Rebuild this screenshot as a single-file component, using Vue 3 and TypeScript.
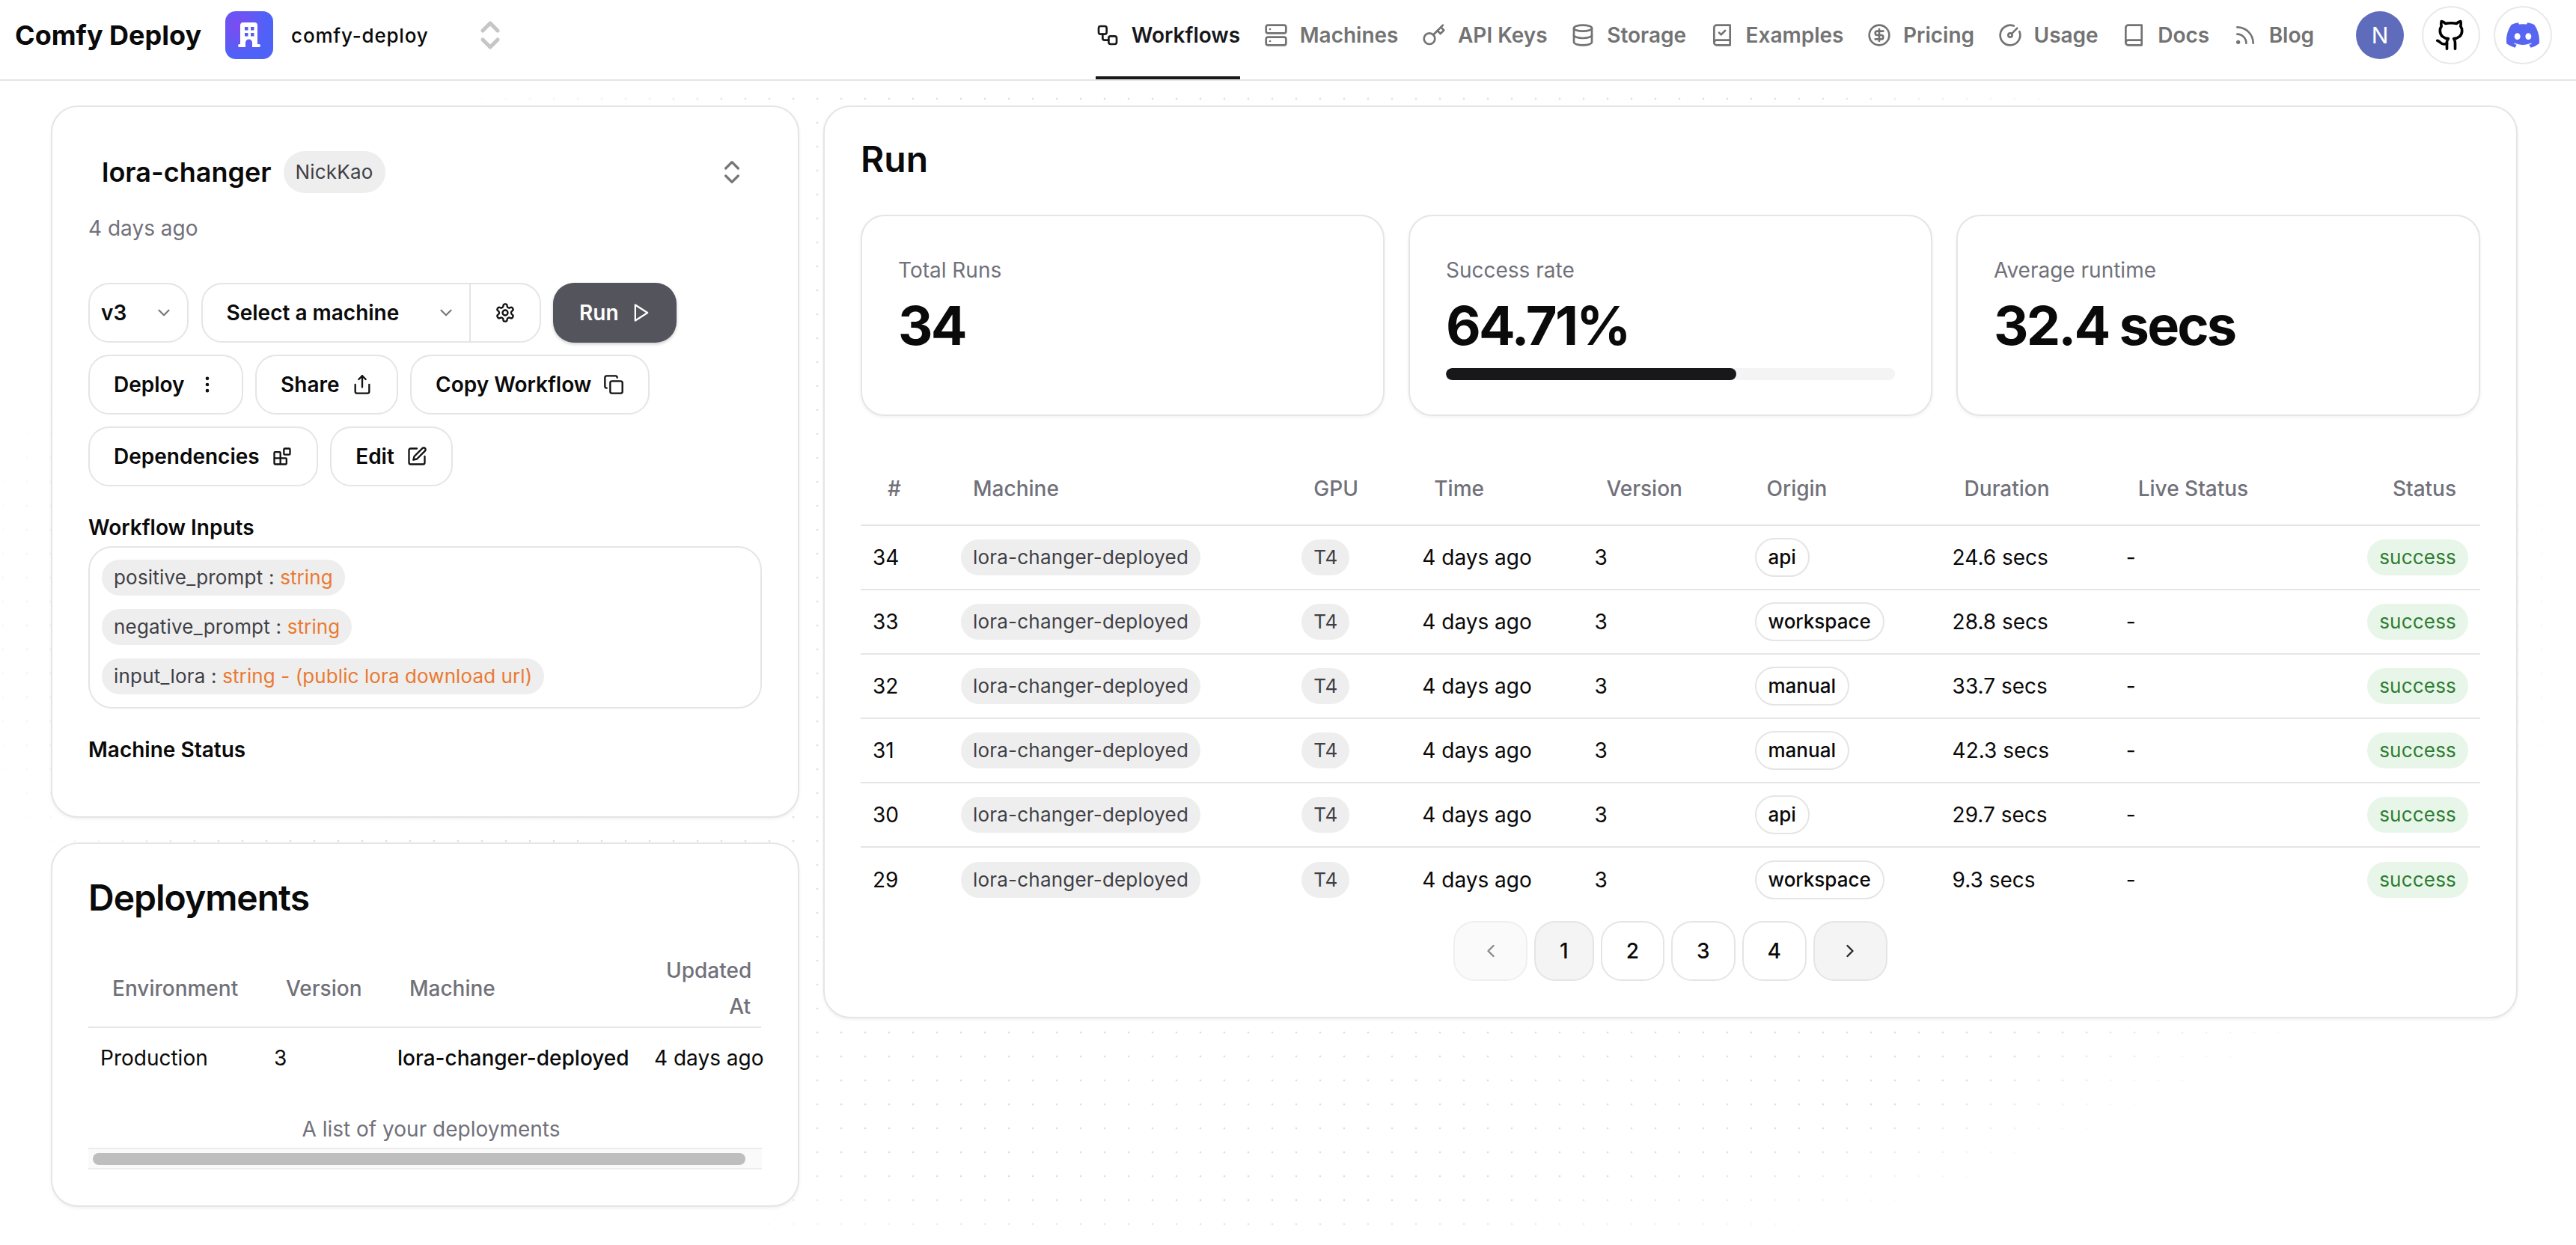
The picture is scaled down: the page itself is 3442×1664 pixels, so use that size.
<template>
  <div class="page">
    <div class="dots"></div>

    <header class="topbar">
      <div class="brand">
        <span class="brand-name">Comfy Deploy</span>
        <span class="team-logo">
          <svg width="64" height="64" viewBox="0 0 64 64">
            <path d="M20 48V19a4 4 0 0 1 4-4h15a4 4 0 0 1 4 4v25h2a2 2 0 0 1 0 4h-9v-6a4.5 4.5 0 0 0-9 0v6h-8a2 2 0 0 1 0-4h1Z" fill="#fff" />
            <rect x="26" y="21" width="4.5" height="4.5" fill="#5a5cf4" />
            <rect x="34" y="21" width="4.5" height="4.5" fill="#5a5cf4" />
            <rect x="26" y="29" width="4.5" height="4.5" fill="#5a5cf4" />
            <rect x="34" y="29" width="4.5" height="4.5" fill="#5a5cf4" />
          </svg>
        </span>
        <span class="team-name">comfy-deploy</span>
        <svg class="team-switch" width="48" height="48" viewBox="0 0 24 24" fill="none" stroke="#c6c6c6" stroke-width="2.6" stroke-linecap="round" stroke-linejoin="round">
          <path d="m7 15 5 5 5-5" />
          <path d="m7 9 5-5 5 5" />
        </svg>
      </div>

      <nav class="nav">
        <a v-for="item in navItems" :key="item.label" class="nav-item" :class="{ active: item.active }">
          <svg width="32" height="32" viewBox="0 0 24 24" fill="none" stroke="currentColor" stroke-width="2" stroke-linecap="round" stroke-linejoin="round" v-html="item.icon"></svg>
          {{ item.label }}
        </a>
      </nav>

      <div class="top-actions">
        <span class="avatar">N</span>
        <span class="round-btn">
          <svg width="44" height="44" viewBox="0 0 24 24" fill="none" stroke="#000" stroke-width="2" stroke-linecap="round" stroke-linejoin="round">
            <path d="M15 22v-4a4.8 4.8 0 0 0-1-3.5c3 0 6-2 6-5.5.08-1.25-.27-2.48-1-3.5.28-1.15.28-2.35 0-3.5 0 0-1 0-3 1.5-2.64-.5-5.36-.5-8 0C6 2 5 2 5 2c-.3 1.15-.3 2.35 0 3.5A5.403 5.403 0 0 0 4 9c0 3.5 3 5.5 6 5.5-.39.49-.68 1.05-.85 1.65-.17.6-.22 1.23-.15 1.85v4" />
            <path d="M9 18c-4.51 2-5-2-7-2" />
          </svg>
        </span>
        <span class="round-btn">
          <svg width="44" height="44" viewBox="0 0 24 24" fill="#5865f2">
            <path d="M20.317 4.37a19.791 19.791 0 0 0-4.885-1.515.074.074 0 0 0-.079.037c-.21.375-.444.864-.608 1.25a18.27 18.27 0 0 0-5.487 0 12.64 12.64 0 0 0-.617-1.25.077.077 0 0 0-.079-.037A19.736 19.736 0 0 0 3.677 4.37a.07.07 0 0 0-.032.027C.533 9.046-.32 13.58.099 18.057a.082.082 0 0 0 .031.057 19.9 19.9 0 0 0 5.993 3.03.078.078 0 0 0 .084-.028 14.09 14.09 0 0 0 1.226-1.994.076.076 0 0 0-.041-.106 13.107 13.107 0 0 1-1.872-.892.077.077 0 0 1-.008-.128 10.2 10.2 0 0 0 .372-.292.074.074 0 0 1 .077-.01c3.928 1.793 8.18 1.793 12.062 0a.074.074 0 0 1 .078.01c.12.098.246.198.373.292a.077.077 0 0 1-.006.127 12.299 12.299 0 0 1-1.873.892.077.077 0 0 0-.041.107c.36.698.772 1.362 1.225 1.993a.076.076 0 0 0 .084.028 19.839 19.839 0 0 0 6.002-3.03.077.077 0 0 0 .032-.054c.5-5.177-.838-9.674-3.549-13.66a.061.061 0 0 0-.031-.03zM8.02 15.33c-1.183 0-2.157-1.085-2.157-2.419 0-1.333.956-2.419 2.157-2.419 1.21 0 2.176 1.096 2.157 2.42 0 1.333-.956 2.418-2.157 2.418zm7.975 0c-1.183 0-2.157-1.085-2.157-2.419 0-1.333.955-2.419 2.157-2.419 1.21 0 2.176 1.096 2.157 2.42 0 1.333-.946 2.418-2.157 2.418z" />
          </svg>
        </span>
      </div>
    </header>

    <main class="content">
      <div class="left-col">
        <section class="card workflow-card">
          <div class="title-row">
            <h2 class="workflow-name">lora-changer</h2>
            <span class="chip owner">NickKao</span>
            <svg class="title-switch" width="40" height="40" viewBox="0 0 24 24" fill="none" stroke="#777" stroke-width="2" stroke-linecap="round" stroke-linejoin="round">
              <path d="m7 15 5 5 5-5" />
              <path d="m7 9 5-5 5 5" />
            </svg>
          </div>
          <p class="updated">4 days ago</p>

          <div class="actions">
            <div class="btn select version-select">
              v3
              <svg width="26" height="26" viewBox="0 0 24 24" fill="none" stroke="#777" stroke-width="2" stroke-linecap="round" stroke-linejoin="round"><path d="m6 9 6 6 6-6" /></svg>
            </div>
            <div class="btn machine-group">
              <div class="machine-select">
                Select a machine
                <svg width="26" height="26" viewBox="0 0 24 24" fill="none" stroke="#777" stroke-width="2" stroke-linecap="round" stroke-linejoin="round"><path d="m6 9 6 6 6-6" /></svg>
              </div>
              <div class="machine-gear">
                <svg width="28" height="28" viewBox="0 0 24 24" fill="none" stroke="#111" stroke-width="2" stroke-linecap="round" stroke-linejoin="round">
                  <path d="M12.22 2h-.44a2 2 0 0 0-2 2v.18a2 2 0 0 1-1 1.73l-.43.25a2 2 0 0 1-2 0l-.15-.08a2 2 0 0 0-2.73.73l-.22.38a2 2 0 0 0 .73 2.73l.15.1a2 2 0 0 1 1 1.72v.51a2 2 0 0 1-1 1.74l-.15.09a2 2 0 0 0-.73 2.73l.22.38a2 2 0 0 0 2.73.73l.15-.08a2 2 0 0 1 2 0l.43.25a2 2 0 0 1 1 1.73V20a2 2 0 0 0 2 2h.44a2 2 0 0 0 2-2v-.18a2 2 0 0 1 1-1.73l.43-.25a2 2 0 0 1 2 0l.15.08a2 2 0 0 0 2.73-.73l.22-.39a2 2 0 0 0-.73-2.73l-.15-.08a2 2 0 0 1-1-1.74v-.5a2 2 0 0 1 1-1.74l.15-.09a2 2 0 0 0 .73-2.73l-.22-.38a2 2 0 0 0-2.73-.73l-.15.08a2 2 0 0 1-2 0l-.43-.25a2 2 0 0 1-1-1.73V4a2 2 0 0 0-2-2z" />
                  <circle cx="12" cy="12" r="3" />
                </svg>
              </div>
            </div>
            <div class="btn run-btn">
              Run
              <svg width="28" height="28" viewBox="0 0 24 24" fill="none" stroke="#fff" stroke-width="2" stroke-linecap="round" stroke-linejoin="round"><polygon points="5 3 19 12 5 21 5 3" /></svg>
            </div>
            <div v-for="action in actionButtons" :key="action.label" class="btn">
              {{ action.label }}
              <svg width="28" height="28" viewBox="0 0 24 24" fill="none" stroke="#111" stroke-width="2" stroke-linecap="round" stroke-linejoin="round" v-html="action.icon"></svg>
            </div>
          </div>

          <h3 class="field-title inputs-title">Workflow Inputs</h3>
          <div class="inputs-box">
            <span v-for="input in workflowInputs" :key="input.name" class="chip input-chip">
              {{ input.name }} : <span class="input-type">{{ input.type }}</span>
            </span>
          </div>

          <h3 class="field-title status-title">Machine Status</h3>
        </section>

        <section class="card deployments-card">
          <h2 class="big-title deployments-title">Deployments</h2>
          <table class="deploy-table">
            <colgroup>
              <col style="width: 232px" />
              <col style="width: 165px" />
              <col style="width: 343px" />
              <col style="width: 159px" />
            </colgroup>
            <thead>
              <tr>
                <th>Environment</th>
                <th>Version</th>
                <th>Machine</th>
                <th class="right">Updated At</th>
              </tr>
            </thead>
            <tbody>
              <tr>
                <td>Production</td>
                <td>3</td>
                <td class="medium">lora-changer-deployed</td>
                <td>4 days ago</td>
              </tr>
            </tbody>
            <caption>A list of your deployments</caption>
          </table>
          <div class="fake-scrollbar"><div class="fake-thumb"></div></div>
        </section>
      </div>

      <section class="card run-card">
        <h2 class="big-title run-title">Run</h2>

        <div class="stats">
          <div class="stat">
            <div class="stat-label">Total Runs</div>
            <div class="stat-value">34</div>
          </div>
          <div class="stat">
            <div class="stat-label">Success rate</div>
            <div class="stat-value">64.71%</div>
            <div class="progress"><div class="progress-fill" :style="{ width: successRate + '%' }"></div></div>
          </div>
          <div class="stat">
            <div class="stat-label">Average runtime</div>
            <div class="stat-value">32.4 secs</div>
          </div>
        </div>

        <table class="runs-table">
          <colgroup>
            <col v-for="w in runColumns" :key="w" :style="{ width: w + 'px' }" />
          </colgroup>
          <thead>
            <tr>
              <th class="hash">#</th>
              <th>Machine</th>
              <th>GPU</th>
              <th>Time</th>
              <th>Version</th>
              <th>Origin</th>
              <th>Duration</th>
              <th>Live Status</th>
              <th class="right">Status</th>
            </tr>
          </thead>
          <tbody>
            <tr v-for="run in runs" :key="run.id">
              <td>{{ run.id }}</td>
              <td><span class="chip cell-chip">lora-changer-deployed</span></td>
              <td><span class="chip cell-chip">T4</span></td>
              <td>4 days ago</td>
              <td>3</td>
              <td><span class="origin-chip">{{ run.origin }}</span></td>
              <td>{{ run.duration }}</td>
              <td>-</td>
              <td class="right"><span class="chip success-chip">success</span></td>
            </tr>
          </tbody>
        </table>

        <div class="pagination">
          <span class="page-btn arrow disabled">
            <svg width="28" height="28" viewBox="0 0 24 24" fill="none" stroke="#8a8a8a" stroke-width="2" stroke-linecap="round" stroke-linejoin="round"><path d="m15 18-6-6 6-6" /></svg>
          </span>
          <span v-for="n in 4" :key="n" class="page-btn num" :class="{ current: n === 1 }">{{ n }}</span>
          <span class="page-btn arrow next">
            <svg width="28" height="28" viewBox="0 0 24 24" fill="none" stroke="#27272a" stroke-width="2" stroke-linecap="round" stroke-linejoin="round"><path d="m9 18 6-6-6-6" /></svg>
          </span>
        </div>
      </section>
    </main>
  </div>
</template>

<script setup lang="ts">
const navItems = [
  { label: 'Workflows', active: true, icon: '<rect width="8" height="8" x="3" y="3" rx="2"/><path d="M7 11v4a2 2 0 0 0 2 2h4"/><rect width="8" height="8" x="13" y="13" rx="2"/>' },
  { label: 'Machines', icon: '<rect width="20" height="8" x="2" y="2" rx="2"/><rect width="20" height="8" x="2" y="14" rx="2"/><line x1="6" x2="6.01" y1="6" y2="6"/><line x1="6" x2="6.01" y1="18" y2="18"/>' },
  { label: 'API Keys', icon: '<circle cx="7.5" cy="15.5" r="5.5"/><path d="m21 2-9.6 9.6"/><path d="m15.5 7.5 3 3L22 7l-3-3"/>' },
  { label: 'Storage', icon: '<ellipse cx="12" cy="5" rx="9" ry="3"/><path d="M3 5V19A9 3 0 0 0 21 19V5"/><path d="M3 12A9 3 0 0 0 21 12"/>' },
  { label: 'Examples', icon: '<path d="M4 19.5v-15A2.5 2.5 0 0 1 6.5 2H20v20H6.5a2.5 2.5 0 0 1 0-5H20"/><path d="m9 9.5 2 2 4-4"/>' },
  { label: 'Pricing', icon: '<circle cx="12" cy="12" r="10"/><path d="M16 8h-6a2 2 0 1 0 0 4h4a2 2 0 1 1 0 4H8"/><path d="M12 18V6"/>' },
  { label: 'Usage', icon: '<path d="M15.6 2.7a10 10 0 1 0 5.7 5.7"/><circle cx="12" cy="12" r="2"/><path d="M13.4 10.6 19 5"/>' },
  { label: 'Docs', icon: '<path d="M4 19.5v-15A2.5 2.5 0 0 1 6.5 2H20v20H6.5a2.5 2.5 0 0 1 0-5H20"/>' },
  { label: 'Blog', icon: '<path d="M4 11a9 9 0 0 1 9 9"/><path d="M4 4a16 16 0 0 1 16 16"/><circle cx="5" cy="19" r="1"/>' },
]

const actionButtons = [
  { label: 'Deploy', icon: '<circle cx="12" cy="12" r="1"/><circle cx="12" cy="5" r="1"/><circle cx="12" cy="19" r="1"/>' },
  { label: 'Share', icon: '<path d="M4 12v8a2 2 0 0 0 2 2h12a2 2 0 0 0 2-2v-8"/><polyline points="16 6 12 2 8 6"/><line x1="12" x2="12" y1="2" y2="15"/>' },
  { label: 'Copy Workflow', icon: '<rect width="14" height="14" x="8" y="8" rx="2"/><path d="M4 16c-1.1 0-2-.9-2-2V4c0-1.1.9-2 2-2h10c1.1 0 2 .9 2 2"/>' },
  { label: 'Dependencies', icon: '<rect width="7" height="7" x="14" y="3" rx="1"/><path d="M10 21V8a1 1 0 0 0-1-1H4a1 1 0 0 0-1 1v12a1 1 0 0 0 1 1h12a1 1 0 0 0 1-1v-5a1 1 0 0 0-1-1H3"/>' },
  { label: 'Edit', icon: '<path d="M12 3H5a2 2 0 0 0-2 2v14a2 2 0 0 0 2 2h14a2 2 0 0 0 2-2v-7"/><path d="M18.375 2.625a2.121 2.121 0 1 1 3 3L12 15l-4 1 1-4Z"/>' },
]

const workflowInputs = [
  { name: 'positive_prompt', type: 'string' },
  { name: 'negative_prompt', type: 'string' },
  { name: 'input_lora', type: 'string - (public lora download url)' },
]

const successRate = 64.71
const runColumns = [118, 455, 161, 230, 214, 264, 232, 300, 189]

const runs = [
  { id: 34, origin: 'api', duration: '24.6 secs' },
  { id: 33, origin: 'workspace', duration: '28.8 secs' },
  { id: 32, origin: 'manual', duration: '33.7 secs' },
  { id: 31, origin: 'manual', duration: '42.3 secs' },
  { id: 30, origin: 'api', duration: '29.7 secs' },
  { id: 29, origin: 'workspace', duration: '9.3 secs' },
]
</script>

<style>
body {
  background: #fff;
}
</style>

<style scoped>
.page {
  position: relative;
  height: 1664px;
  overflow: hidden;
  background: #fff;
  color: #0a0a0a;
  font-family: "Inter", "Noto Sans", sans-serif;
  font-size: 28px;
}

.dots {
  position: absolute;
  inset: 0;
  background-image: radial-gradient(circle, #dedede 1.5px, transparent 1.6px);
  background-size: 32px 32px;
  background-position: -12px -12px;
  -webkit-mask-image: radial-gradient(ellipse 1766px 900px at 1700px 832px, #000 86%, transparent 100%);
  mask-image: radial-gradient(ellipse 1766px 900px at 1700px 832px, #000 86%, transparent 100%);
}

.topbar {
  position: relative;
  display: flex;
  align-items: center;
  height: 108px;
  padding: 0 32px 12px 20px;
  box-sizing: border-box;
  background: #fff;
  border-bottom: 2px solid #e5e5e8;
}

.brand {
  display: flex;
  align-items: center;
}

.brand-name {
  font-size: 36px;
  font-weight: 700;
  line-height: 48px;
  white-space: nowrap;
}

.team-logo {
  display: block;
  width: 64px;
  height: 64px;
  margin-left: 32px;
  border-radius: 14px;
  background: radial-gradient(circle at 25% 30%, #7d4bf1, #4f62f7 62%);
}

.team-name {
  margin-left: 24px;
  width: 242px;
  font-size: 26px;
  font-weight: 500;
  letter-spacing: 0.8px;
}

.nav {
  display: flex;
  align-items: center;
  gap: 31.5px;
  margin-left: auto;
  height: 106px;
  margin-top: 12px;
}

.nav-item {
  display: flex;
  align-items: center;
  gap: 16px;
  height: 100%;
  padding-bottom: 8px;
  box-sizing: border-box;
  color: #737373;
  font-weight: 600;
  white-space: nowrap;
  border-bottom: 4px solid transparent;
}

.nav-item.active {
  color: #18181b;
  border-bottom-color: #18181b;
}

.top-actions {
  display: flex;
  align-items: center;
  gap: 18px;
  margin-left: 56px;
}

.avatar {
  display: flex;
  align-items: center;
  justify-content: center;
  width: 64px;
  height: 64px;
  margin-right: 6px;
  border-radius: 50%;
  background: #5f6cbb;
  color: #fff;
  font-size: 30px;
}

.round-btn {
  display: flex;
  align-items: center;
  justify-content: center;
  width: 78px;
  height: 78px;
  box-sizing: border-box;
  border: 2px solid #e8e8e8;
  border-radius: 50%;
  background: #fff;
}

.content {
  position: relative;
  display: flex;
  gap: 32px;
  align-items: flex-start;
  padding: 33px 78px 0 68px;
}

.left-col {
  display: flex;
  flex-direction: column;
  gap: 33px;
  width: 1000px;
  flex: none;
}

.card {
  box-sizing: border-box;
  background: #fff;
  border: 2px solid #e5e5e5;
  border-radius: 36px;
  padding: 48px;
  box-shadow: 0 2px 4px rgba(0, 0, 0, 0.06);
}

.workflow-card {
  padding-bottom: 69px;
}

.title-row {
  display: flex;
  align-items: center;
  gap: 16px;
  height: 78px;
  padding: 0 20px 0 18px;
}

.workflow-name {
  margin: 0;
  font-size: 36px;
  font-weight: 600;
  line-height: 48px;
}

.chip {
  display: inline-flex;
  align-items: center;
  box-sizing: border-box;
  background: #eeeeee;
  border-radius: 24px;
  color: #3f3f46;
  font-size: 26px;
  letter-spacing: 0.2px;
  line-height: 48px;
  padding: 0 16px;
  white-space: pre;
}

.owner {
  height: 56px;
  border-radius: 28px;
}

.title-switch {
  margin-left: auto;
}

.updated {
  margin: 16px 0 0;
  color: #71717a;
  line-height: 40px;
}

.actions {
  display: flex;
  flex-wrap: wrap;
  gap: 16px 16.5px;
  margin-top: 53px;
}

.btn {
  display: flex;
  align-items: center;
  gap: 16px;
  height: 80px;
  box-sizing: border-box;
  padding: 0 32px;
  border: 2px solid #e5e5e5;
  border-radius: 28px;
  background: #fff;
  font-weight: 600;
  white-space: nowrap;
}

.version-select {
  justify-content: space-between;
  width: 134px;
  padding: 0 18px 0 15px;
}

.machine-group {
  width: 454px;
  padding: 0;
  gap: 0;
}

.machine-select {
  display: flex;
  align-items: center;
  justify-content: space-between;
  flex: none;
  width: 358px;
  height: 100%;
  box-sizing: border-box;
  padding: 0 18px 0 32px;
  border-right: 2px solid #e5e5e5;
}

.machine-gear {
  display: flex;
  align-items: center;
  justify-content: center;
  flex: 1;
}

.run-btn {
  width: 165px;
  padding: 0 0 0 35px;
  border: none;
  background: #54555c;
  color: #fff;
  box-shadow: 0 2px 4px rgba(0, 0, 0, 0.2);
}

.field-title {
  margin: 0;
  font-size: 28px;
  font-weight: 600;
  line-height: 40px;
}

.inputs-title {
  margin-top: 35px;
}

.inputs-box {
  display: flex;
  flex-direction: column;
  align-items: flex-start;
  gap: 18px;
  margin-top: 5px;
  padding: 16px 16px 17px;
  border: 2px solid #e5e5e5;
  border-radius: 32px;
}

.input-type {
  color: #ea7a32;
  letter-spacing: 0.1px;
}

.status-title {
  margin-top: 35px;
}

.big-title {
  margin: 0;
  font-size: 48px;
  font-weight: 600;
  line-height: 48px;
}

.deployments-title {
  margin-bottom: 49px;
  letter-spacing: -1px;
}

.deploy-table {
  table-layout: fixed;
  width: 899px;
  border-collapse: collapse;
  caption-side: bottom;
}

.deploy-table caption {
  padding: 35px 0 0 17px;
  color: #71717a;
  line-height: 40px;
}

.deploy-table th {
  padding: 0 32px 3px;
  border-bottom: 2px solid #e5e5e5;
  color: #71717a;
  font-weight: 500;
  line-height: 48px;
  text-align: left;
}

.deploy-table th.right {
  padding-right: 14px;
  text-align: right;
}

.deploy-table td {
  height: 80px;
  padding: 0 16px;
  white-space: nowrap;
}

.deploy-table td:last-child {
  padding-right: 0;
}

.medium {
  font-weight: 500;
}

.fake-scrollbar {
  margin-top: 5px;
  padding: 5px 22px 4px 6px;
  background: #fafafa;
  border-top: 2px solid #ececec;
  border-bottom: 2px solid #ececec;
}

.fake-thumb {
  height: 16px;
  border-radius: 8px;
  background: #bebebe;
}

.run-card {
  flex: 1;
  min-width: 0;
}

.run-title {
  margin-bottom: 52px;
  line-height: 44px;
}

.stats {
  display: grid;
  grid-template-columns: repeat(3, 1fr);
  gap: 32px;
}

.stat {
  box-sizing: border-box;
  height: 269px;
  padding: 48px;
  border: 2px solid #e5e5e5;
  border-radius: 32px;
  box-shadow: 0 2px 4px rgba(0, 0, 0, 0.06);
}

.stat-label {
  color: #71717a;
  font-size: 28px;
  line-height: 48px;
}

.stat-value {
  margin-top: 10px;
  font-size: 72px;
  font-weight: 700;
  letter-spacing: -2.8px;
  line-height: 80px;
}

.progress {
  height: 16px;
  margin-top: 17px;
  border-radius: 8px;
  background: #f4f4f5;
  overflow: hidden;
}

.progress-fill {
  height: 100%;
  border-radius: 8px;
  background: #18181b;
}

.runs-table {
  table-layout: fixed;
  width: 100%;
  margin-top: 48px;
  border-collapse: collapse;
}

.runs-table th {
  height: 98px;
  padding: 0 32px;
  border-bottom: 2px solid #e5e5e5;
  color: #71717a;
  font-weight: 500;
  text-align: left;
  box-sizing: border-box;
}

.runs-table th.hash {
  padding-left: 36px;
}

.runs-table th.right {
  text-align: right;
}

.runs-table td {
  height: 86px;
  padding: 0 16px;
  border-bottom: 2px solid #e5e5e5;
  box-sizing: border-box;
  white-space: nowrap;
}

.runs-table td.right {
  text-align: right;
}

.runs-table tbody tr:last-child td {
  border-bottom: none;
}

.cell-chip {
  height: 48px;
  vertical-align: middle;
}

.origin-chip {
  display: inline-block;
  box-sizing: border-box;
  height: 52px;
  padding: 0 16px;
  border: 2px solid #e5e5e5;
  border-radius: 26px;
  background: #fff;
  font-size: 26px;
  font-weight: 500;
  line-height: 48px;
  vertical-align: middle;
}

.success-chip {
  height: 48px;
  background: #e8f5e9;
  color: #2e7d32;
  vertical-align: middle;
}

.pagination {
  display: flex;
  justify-content: center;
  gap: 9px;
  margin-top: 13px;
}

.page-btn {
  display: flex;
  align-items: center;
  justify-content: center;
  box-sizing: border-box;
  height: 80px;
  border: 2px solid #e5e5e5;
  border-radius: 28px;
  font-weight: 500;
}

.page-btn.num {
  padding: 0 32px;
}

.page-btn.current {
  background: #f4f4f5;
}

.page-btn.arrow {
  width: 99px;
}

.page-btn.disabled {
  background: #fafafa;
  border-color: #efefef;
}

.page-btn.next {
  background: #f4f4f5;
}
</style>
